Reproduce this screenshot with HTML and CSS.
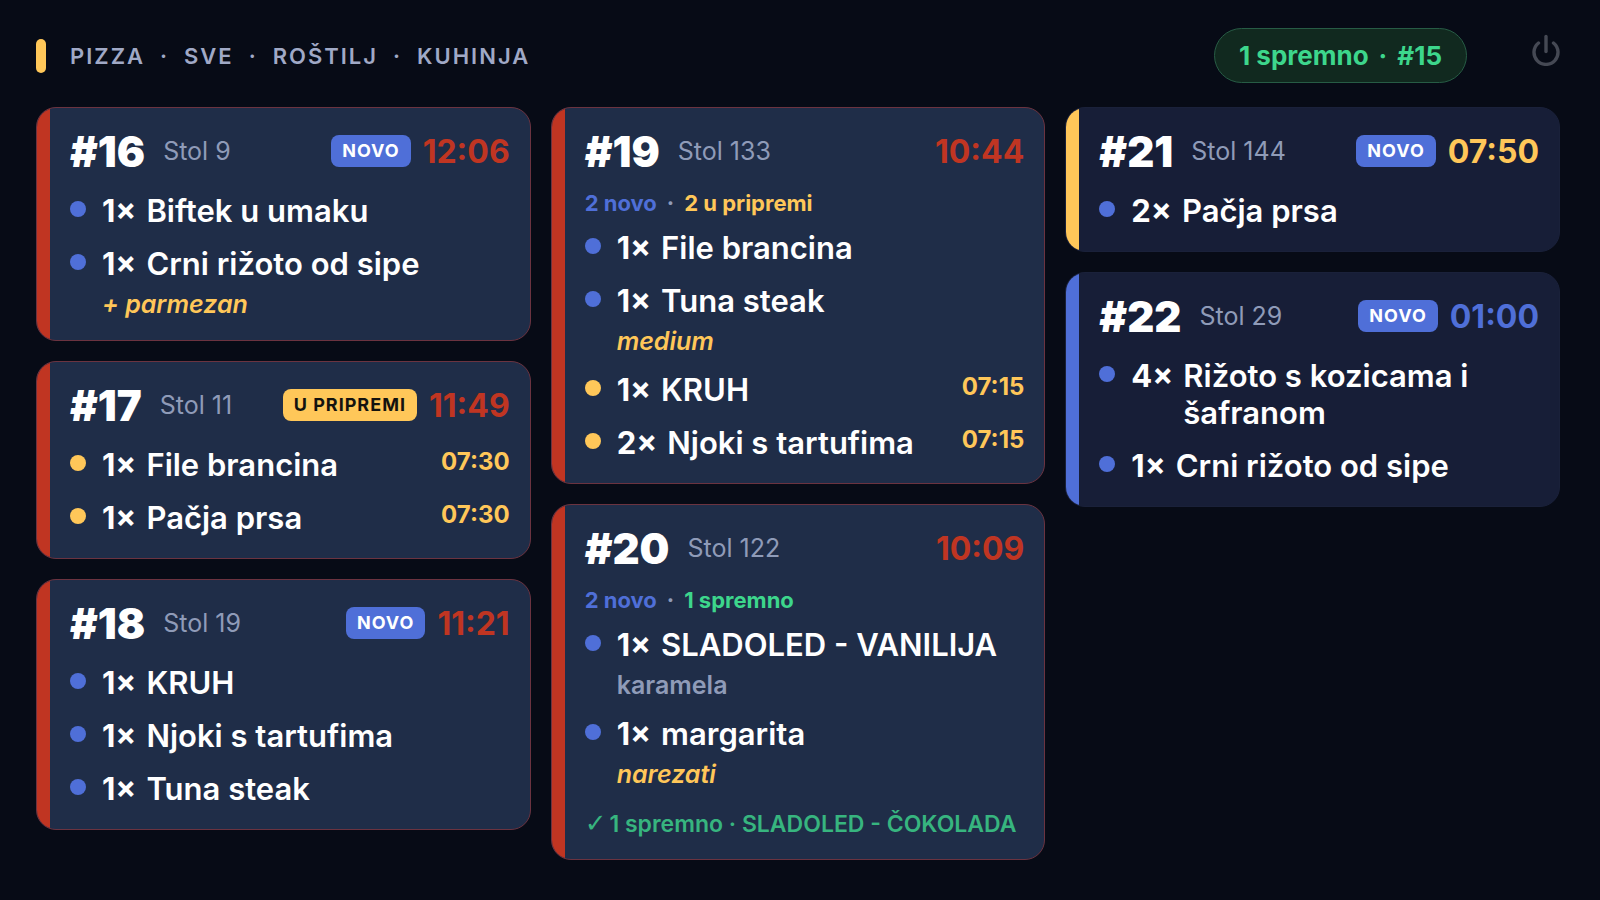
FILE: index.html
```html
<!DOCTYPE html>
<html lang="hr">
<head>
  <meta charset="UTF-8" />
  <meta name="viewport" content="width=device-width, initial-scale=1.0" />
  <title>Kuhinja</title>
  <link rel="stylesheet" href="styles.css">
</head>
<body>
  <header class="topbar">
    <span class="marker"></span>
    <h1 class="stations">
      <span>PIZZA</span><span>·</span><span>SVE</span><span>·</span><span>ROŠTILJ</span><span>·</span><span>KUHINJA</span>
    </h1>
    <div class="ready-pill"><span>1 spremno</span><span>·</span><span>#15</span></div>
    <button class="power" type="button" aria-label="Odjava">
      <svg viewBox="0 0 28 32" width="28" height="32" fill="none" stroke="currentColor" stroke-width="3.4" stroke-linecap="round">
        <path d="M14 2.500v15" />
        <path d="M6.500 9a12 12 0 1 0 15 0" />
      </svg>
    </button>
  </header>

  <main class="board">
    <div class="column">
      <article class="card late">
        <div class="head">
          <h2 class="number">#16</h2>
          <span class="table">Stol 9</span>
          <span class="badge new">NOVO</span>
          <span class="timer">12:06</span>
        </div>
        <ul class="items">
          <li class="item"><span class="dot"></span><span class="qty">1×</span><span class="name">Biftek u umaku</span></li>
          <li class="item"><span class="dot"></span><span class="qty">1×</span><span class="name">Crni rižoto od sipe</span><p class="note">+ parmezan</p></li>
        </ul>
      </article>

      <article class="card late">
        <div class="head">
          <h2 class="number">#17</h2>
          <span class="table">Stol 11</span>
          <span class="badge prep">U PRIPREMI</span>
          <span class="timer">11:49</span>
        </div>
        <ul class="items">
          <li class="item prep"><span class="dot"></span><span class="qty">1×</span><span class="name">File brancina</span><span class="since">07:30</span></li>
          <li class="item prep"><span class="dot"></span><span class="qty">1×</span><span class="name">Pačja prsa</span><span class="since">07:30</span></li>
        </ul>
      </article>

      <article class="card late">
        <div class="head">
          <h2 class="number">#18</h2>
          <span class="table">Stol 19</span>
          <span class="badge new">NOVO</span>
          <span class="timer">11:21</span>
        </div>
        <ul class="items">
          <li class="item"><span class="dot"></span><span class="qty">1×</span><span class="name">KRUH</span></li>
          <li class="item"><span class="dot"></span><span class="qty">1×</span><span class="name">Njoki s tartufima</span></li>
          <li class="item"><span class="dot"></span><span class="qty">1×</span><span class="name">Tuna steak</span></li>
        </ul>
      </article>
    </div>

    <div class="column">
      <article class="card late">
        <div class="head">
          <h2 class="number">#19</h2>
          <span class="table">Stol 133</span>
          <span class="timer">10:44</span>
        </div>
        <p class="summary"><span class="c-new">2 novo</span><span>·</span><span class="c-prep">2 u pripremi</span></p>
        <ul class="items">
          <li class="item"><span class="dot"></span><span class="qty">1×</span><span class="name">File brancina</span></li>
          <li class="item"><span class="dot"></span><span class="qty">1×</span><span class="name">Tuna steak</span><p class="note">medium</p></li>
          <li class="item prep"><span class="dot"></span><span class="qty">1×</span><span class="name">KRUH</span><span class="since">07:15</span></li>
          <li class="item prep"><span class="dot"></span><span class="qty">2×</span><span class="name">Njoki s tartufima</span><span class="since">07:15</span></li>
        </ul>
      </article>

      <article class="card late">
        <div class="head">
          <h2 class="number">#20</h2>
          <span class="table">Stol 122</span>
          <span class="timer">10:09</span>
        </div>
        <p class="summary"><span class="c-new">2 novo</span><span>·</span><span class="c-ready">1 spremno</span></p>
        <ul class="items">
          <li class="item"><span class="dot"></span><span class="qty">1×</span><span class="name">SLADOLED - VANILIJA</span><p class="note plain">karamela</p></li>
          <li class="item"><span class="dot"></span><span class="qty">1×</span><span class="name">margarita</span><p class="note">narezati</p></li>
        </ul>
        <p class="done"><span class="check">✓</span>1 spremno · SLADOLED - ČOKOLADA</p>
      </article>
    </div>

    <div class="column">
      <article class="card warn">
        <div class="head">
          <h2 class="number">#21</h2>
          <span class="table">Stol 144</span>
          <span class="badge new">NOVO</span>
          <span class="timer">07:50</span>
        </div>
        <ul class="items">
          <li class="item"><span class="dot"></span><span class="qty">2×</span><span class="name">Pačja prsa</span></li>
        </ul>
      </article>

      <article class="card fresh">
        <div class="head">
          <h2 class="number">#22</h2>
          <span class="table">Stol 29</span>
          <span class="badge new">NOVO</span>
          <span class="timer">01:00</span>
        </div>
        <ul class="items">
          <li class="item"><span class="dot"></span><span class="qty">4×</span><span class="name">Rižoto s kozicama i šafranom</span></li>
          <li class="item"><span class="dot"></span><span class="qty">1×</span><span class="name">Crni rižoto od sipe</span></li>
        </ul>
      </article>
    </div>
  </main>
</body>
</html>
```

FILE: styles.css
```css
:root {
  --bg: #070b16;
  --card: #171e37;
  --card-late: #1f2d48;
  --red: #c03522;
  --yellow: #ffc759;
  --blue: #4f6fd8;
  --green: #3dd68c;
  --muted: #8f9bb8;
}

* {
  box-sizing: border-box;
}

body {
  margin: 0;
  min-height: 100vh;
  padding: 28px 40px 28px 36px;
  background: var(--bg);
  color: #fff;
  font-family: Inter, sans-serif;
}

h1, h2, p, ul {
  margin: 0;
  padding: 0;
}

.topbar {
  display: flex;
  align-items: center;
  height: 55px;
  margin-bottom: 24px;
}

.marker {
  width: 10px;
  height: 34px;
  border-radius: 5px;
  background: var(--yellow);
}

.stations {
  display: flex;
  gap: 15px;
  margin-left: 24px;
  margin-right: auto;
  color: #a0a9c6;
  font-size: 22px;
  font-weight: 600;
  line-height: 28px;
  letter-spacing: 2px;
}

.ready-pill {
  display: flex;
  gap: 10px;
  padding: 0 24px;
  border: 1px solid #275c45;
  border-radius: 28px;
  background: #11291f;
  color: var(--green);
  font-size: 26px;
  font-weight: 700;
  line-height: 53px;
}

.power {
  display: flex;
  margin-left: 65px;
  padding: 0 0 12px;
  border: none;
  background: none;
  color: #454954;
  cursor: pointer;
}

.board {
  display: grid;
  grid-template-columns: repeat(3, minmax(0, 1fr));
  gap: 20px;
  align-items: start;
}

.column {
  display: flex;
  flex-direction: column;
  gap: 20px;
}

.card {
  position: relative;
  overflow: hidden;
  padding: 18px 20px 14px 33px;
  border: 1px solid #1a213a;
  border-radius: 20px;
  background: var(--card);
}

/* urgency stripe */
.card::before {
  content: "";
  position: absolute;
  top: -1px;
  bottom: -1px;
  left: -1px;
  width: 14px;
  background: var(--accent);
}

.card.late {
  --accent: var(--red);
  border-color: #6b3340;
  background: var(--card-late);
}

.card.warn {
  --accent: var(--yellow);
}

.card.fresh {
  --accent: var(--blue);
}

.head {
  display: flex;
  align-items: center;
  height: 50px;
  margin-bottom: 8px;
}

.number {
  font-size: 42px;
  font-weight: 900;
}

.table {
  margin-left: 18px;
  margin-right: auto;
  color: var(--muted);
  font-size: 25px;
}

.badge {
  margin-right: 12px;
  padding: 0 11px;
  border-radius: 8px;
  font-size: 18px;
  font-weight: 700;
  line-height: 32px;
  letter-spacing: 1px;
}

.badge.new {
  background: var(--blue);
}

.badge.prep {
  background: var(--yellow);
  color: #14130f;
}

.timer {
  color: var(--accent);
  font-size: 32px;
  font-weight: 700;
}

.summary {
  display: flex;
  gap: 10px;
  padding-top: 2px;
  color: var(--muted);
  font-size: 22px;
  font-weight: 700;
  line-height: 35px;
}

.c-new {
  color: var(--blue);
}

.c-prep {
  color: var(--yellow);
}

.c-ready {
  color: var(--green);
}

.items {
  list-style: none;
}

.item {
  display: grid;
  grid-template-columns: 16px auto 1fr auto;
  padding: 8px 0;
  font-size: 31px;
  font-weight: 600;
  line-height: 37px;
}

.dot {
  width: 16px;
  height: 16px;
  margin-top: 9px;
  border-radius: 50%;
  background: var(--blue);
}

.item.prep .dot {
  background: var(--yellow);
}

.qty {
  margin-left: 16px;
  margin-right: 10px;
  font-weight: 700;
}

.since {
  color: var(--yellow);
  font-size: 24px;
  font-weight: 700;
  line-height: 31px;
}

.note {
  grid-column: 2 / -1;
  margin-top: 8px;
  margin-left: 16px;
  color: var(--yellow);
  font-size: 25px;
  font-style: italic;
  font-weight: 600;
  line-height: 28px;
}

.note.plain {
  color: var(--muted);
  font-style: normal;
}

.done {
  overflow: hidden;
  margin-top: 8px;
  padding: 3px 0 5px;
  color: #37b57f;
  font-size: 23px;
  font-weight: 600;
  line-height: 32px;
  white-space: nowrap;
}

.check {
  margin-right: 3px;
  font-family: "DejaVu Sans", sans-serif;
  font-size: 26px;
}
```
